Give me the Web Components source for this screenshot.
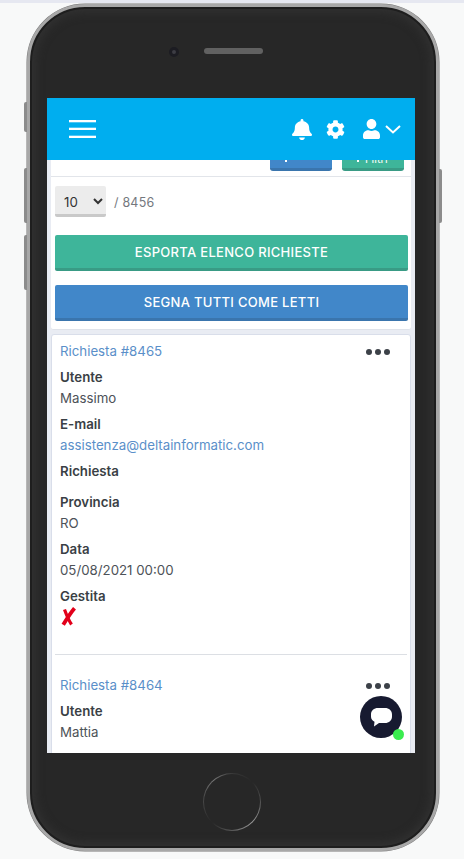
<!DOCTYPE html>
<html lang="it">
<head>
<meta charset="utf-8">
<title>Richieste</title>
<style>
  html, body { margin: 0; padding: 0; height: 100%; overflow: hidden; }
  body { background: #f8f9f9; font-family: Inter, "Liberation Sans", sans-serif; }
</style>
</head>
<body>
<phone-frame>
  <app-header></app-header>
  <toolbar-card total="8456"></toolbar-card>
  <request-card num="8465" user="Massimo" mail="assistenza@deltainformatic.com" prov="RO" date="05/08/2021 00:00"></request-card>
  <chat-bubble slot="overlay"></chat-bubble>
</phone-frame>

<script>
  class PhoneFrame extends HTMLElement {
    constructor() {
      super();
      var sh = this.attachShadow({ mode: "open" });
      sh.innerHTML = `
        <style>
          :host { display: block; }
          .strip { height: 3px; background: #e6e8f1; }
          .wrap { padding: 1px 0 0 27px; }
          .body {
            position: relative;
            box-sizing: border-box;
            width: 412px;
            height: 847px;
            border: 3px solid #a8a8a8;
            border-radius: 58px;
            background: #272727;
            box-shadow: 0 0 0 .5px #777, inset 0 0 0 2px #1e1e1e, inset 0 0 10px 5px #323232;
            padding: 91px 0 0 17px;
          }
          .side { position: absolute; width: 3px; background: #8c8c8c; }
          .l { left: -6px; border-radius: 2px 0 0 2px; }
          .r { right: -6px; border-radius: 0 2px 2px 0; }
          .camera {
            position: absolute; left: 139px; top: 40px;
            width: 4px; height: 4px; border-radius: 50%;
            background: #3d3d44; border: 3px solid #1c1c22;
          }
          .speaker {
            position: absolute; left: 174px; top: 41px;
            width: 59px; height: 6px; border-radius: 3px; background: #616161;
          }
          .screen {
            position: relative;
            width: 368px;
            height: 655px;
            overflow: hidden;
            background: #e9ecf3;
            display: flex;
            flex-direction: column;
          }
          .content { flex: 1; min-height: 0; overflow: hidden; margin-top: -22px; padding: 0 4px; }
          .home {
            position: absolute; left: 173px; top: 766px;
            box-sizing: border-box;
            width: 58px; height: 58px; border-radius: 50%;
            border: 1.5px solid transparent;
            background: linear-gradient(#272727, #272727) padding-box,
              conic-gradient(#3a3a3a 0deg, #272727 45deg, #555 90deg, #999 135deg, #5a5a5a 180deg, #272727 225deg, #555 290deg, #777 320deg, #3a3a3a 360deg) border-box;
          }
        </style>
        <div class="strip"></div>
        <div class="wrap">
          <div class="body">
            <i class="side l" style="top:95px;height:30px"></i>
            <i class="side l" style="top:161px;height:55px"></i>
            <i class="side l" style="top:228px;height:55px"></i>
            <i class="side r" style="top:162px;height:54px"></i>
            <i class="camera"></i>
            <i class="speaker"></i>
            <div class="screen">
              <slot name="head"></slot>
              <div class="content"><slot></slot></div>
              <slot name="overlay"></slot>
            </div>
            <i class="home"></i>
          </div>
        </div>
      `;
    }
    connectedCallback() {
      // the header sits on top of the scrolled content
      var h = this.querySelector("app-header");
      if (h) h.setAttribute("slot", "head");
    }
  }

  class AppHeader extends HTMLElement {
    constructor() {
      super();
      var sh = this.attachShadow({ mode: "open" });
      sh.innerHTML = `
        <style>
          :host {
            display: flex; position: relative; z-index: 2;
            height: 62px; flex: none; align-items: center;
            background: #00aeef; padding: 0 14px 0 22px; color: #fff;
          }
          .burger { margin-right: auto; }
          svg { display: block; fill: #fff; }
          .bell { margin-right: 14px; }
          .cog { margin-right: 18px; }
          .user { margin-right: 5px; }
        </style>
        <svg class="burger" width="27" height="18" viewBox="0 0 27 18"><rect width="27" height="2.3"/><rect y="7.7" width="27" height="2.3"/><rect y="15.7" width="27" height="2.3"/></svg>
        <svg class="bell" width="20" height="21" viewBox="0 0 448 512" preserveAspectRatio="none"><path d="M224 512c35.32 0 63.97-28.65 63.97-64H160.03c0 35.35 28.65 64 63.97 64zm215.39-149.71c-19.32-20.76-55.47-51.99-55.47-154.29 0-77.7-54.48-139.9-127.94-155.16V32c0-17.67-14.32-32-31.98-32s-31.98 14.33-31.98 32v20.84C118.56 68.1 64.08 130.3 64.08 208c0 102.3-36.15 133.53-55.47 154.29-6 6.45-8.66 14.16-8.61 21.71.11 16.4 12.98 32 32.1 32h383.8c19.12 0 32-15.6 32.1-32 .05-7.55-2.61-15.27-8.61-21.71z"/></svg>
        <svg class="cog" width="19" height="19" viewBox="0 0 512 512"><path d="M487.4 315.7l-42.6-24.6c4.3-23.2 4.3-47 0-70.2l42.6-24.6c4.9-2.8 7.1-8.6 5.5-14-11.1-35.6-30-67.8-54.7-94.6-3.8-4.1-10-5.1-14.8-2.3L380.8 110c-17.9-15.4-38.5-27.3-60.8-35.1V25.8c0-5.6-3.9-10.5-9.4-11.7-36.7-8.2-74.3-7.8-109.2 0-5.5 1.2-9.4 6.1-9.4 11.7V75c-22.2 7.9-42.8 19.8-60.8 35.1L88.7 85.5c-4.9-2.8-11-1.9-14.8 2.3-24.7 26.7-43.6 58.9-54.7 94.6-1.7 5.4.6 11.2 5.5 14L67.3 221c-4.3 23.2-4.3 47 0 70.2l-42.6 24.6c-4.9 2.8-7.1 8.6-5.5 14 11.1 35.6 30 67.8 54.7 94.6 3.8 4.1 10 5.1 14.8 2.3l42.6-24.6c17.9 15.4 38.5 27.3 60.8 35.1v49.2c0 5.6 3.9 10.5 9.4 11.7 36.7 8.2 74.3 7.8 109.2 0 5.5-1.2 9.4-6.1 9.4-11.7v-49.2c22.2-7.9 42.8-19.8 60.8-35.1l42.6 24.6c4.9 2.8 11 1.9 14.8-2.3 24.7-26.7 43.6-58.9 54.7-94.6 1.5-5.5-.7-11.3-5.6-14.1zM256 336c-44.1 0-80-35.9-80-80s35.9-80 80-80 80 35.9 80 80-35.9 80-80 80z"/></svg>
        <svg class="user" width="17" height="20" viewBox="0 0 448 512" preserveAspectRatio="none"><path d="M224 256c70.7 0 128-57.3 128-128S294.7 0 224 0 96 57.3 96 128s57.3 128 128 128zm89.6 32h-16.7c-22.2 10.2-46.9 16-72.9 16s-50.6-5.8-72.9-16h-16.7C60.2 288 0 348.2 0 422.4V464c0 26.5 21.5 48 48 48h352c26.5 0 48-21.5 48-48v-41.6c0-74.2-60.2-134.4-134.4-134.4z"/></svg>
        <svg width="16" height="9" viewBox="0 0 16 9" style="fill:none;stroke:#fff;stroke-width:2"><path d="M1 1l7 6.500L15 1"/></svg>
      `;
    }
  }

  class ToolbarCard extends HTMLElement {
    constructor() {
      super();
      var sh = this.attachShadow({ mode: "open" });
      sh.innerHTML = `
        <style>
          :host {
            display: block; background: #fff; border-radius: 3px;
            border-bottom: 1px solid #dfe3ea; margin-bottom: 4px;
            font-family: Inter, "Liberation Sans", sans-serif;
          }
          .top {
            display: flex; justify-content: flex-end; gap: 10px;
            padding: 0 7px 5px 0; border-bottom: 1px solid #e2e5ea;
          }
          .mini {
            box-sizing: border-box; width: 62px; height: 33px;
            border-radius: 3px; color: #fff; font-size: 11px; line-height: 13px;
            display: flex; align-items: flex-end; gap: 6px; padding: 0 0 2px 15px;
          }
          .mini i { width: 2px; height: 6px; margin-bottom: 4px; background: #fff; }
          .blue { background: #4187c9; border-bottom: 3px solid #3a75ad; }
          .green { background: #3eb59a; border-bottom: 3px solid #399b85; }
          .count { display: flex; align-items: center; gap: 8px; padding: 9px 4px 18px; }
          select {
            box-sizing: border-box; width: 51px; height: 31px; padding: 3px 0 0 5px;
            font: 13.3px Inter, "Liberation Sans", sans-serif; color: #333;
            background: #ececec; border: 0; border-bottom: 3px solid #c9c9c9; border-radius: 2px;
          }
          .total { font-size: 12.5px; color: #74787e; letter-spacing: .2px; margin-top: 2px; }
          .actions { display: flex; flex-direction: column; gap: 14px; padding: 0 3px 8px 4px; }
          .wide {
            box-sizing: border-box; height: 36px; border-radius: 2px; color: #fff;
            font-size: 13px; font-weight: 500; letter-spacing: .3px;
            display: flex; align-items: center; justify-content: center; padding-top: 1px;
          }
        </style>
        <div class="top">
          <div class="mini blue"><i></i></div>
          <div class="mini green"><i></i>Filtri</div>
        </div>
        <div class="count">
          <select><option>10</option><option>25</option><option>50</option></select>
          <span class="total">/ ${this.getAttribute("total")}</span>
        </div>
        <div class="actions">
          <div class="wide green">ESPORTA ELENCO RICHIESTE</div>
          <div class="wide blue">SEGNA TUTTI COME LETTI</div>
        </div>
      `;
    }
  }

  class RequestEntry extends HTMLElement {
    constructor() {
      super();
      var sh = this.attachShadow({ mode: "open" });
      sh.innerHTML = `
        <style>
          :host {
            display: block; padding: 6px 5px 0;
            font-size: 13.28px; line-height: 21px; color: #4d5258;
            font-family: Inter, "Liberation Sans", sans-serif;
          }
          .head { display: flex; justify-content: space-between; align-items: center; margin-bottom: 5px; }
          .title { color: #5a8fc9; }
          .dots { display: flex; gap: 3px; margin-right: 12px; }
          .dots i { width: 6px; height: 6px; border-radius: 50%; background: #3c4148; }
        </style>
        <div class="head">
          <span class="title">Richiesta #${this.getAttribute("num")}</span>
          <span class="dots"><i></i><i></i><i></i></span>
        </div>
        <slot></slot>
      `;
    }
  }

  class ReqField extends HTMLElement {
    constructor() {
      super();
      var sh = this.attachShadow({ mode: "open" });
      sh.innerHTML = `
        <style>
          :host { display: block; margin-bottom: 5px; }
          b { display: block; font-weight: 600; color: #3a3f45; }
          .v { display: block; min-height: 5px; }
          .link { color: #5a8fc9; }
        </style>
        <b>${this.getAttribute("label")}</b>
        <span class="v ${this.hasAttribute("link") ? "link" : ""}"><slot></slot></span>
      `;
    }
  }

  class RequestCard extends HTMLElement {
    constructor() {
      super();
      var sh = this.attachShadow({ mode: "open" });
      sh.innerHTML = `
        <style>
          :host {
            display: block; background: #fff; border: 1px solid #d9deea; border-radius: 3px;
            padding: 0 3px 60px;
          }
          hr { border: 0; border-top: 1px solid #dcdfe4; margin: 28px 0 14px 0; }
          svg { display: block; }
        </style>
        <request-entry num="${this.getAttribute("num")}">
          <req-field label="Utente">${this.getAttribute("user")}</req-field>
          <req-field label="E-mail" link>${this.getAttribute("mail")}</req-field>
          <req-field label="Richiesta"></req-field>
          <req-field label="Provincia">${this.getAttribute("prov")}</req-field>
          <req-field label="Data">${this.getAttribute("date")}</req-field>
          <req-field label="Gestita">
            <svg width="17" height="19" viewBox="0 0 17 19" fill="none" stroke="#e2001a"><path stroke-width="3.8" d="M14.500 1.200C10.500 6 7 11.500 3.200 17.800"/><path stroke-width="3.200" d="M4.500 2.500C6.500 8 8.500 13 11.500 17.500"/></svg>
          </req-field>
        </request-entry>
        <hr>
        <request-entry num="8464">
          <req-field label="Utente">Mattia</req-field>
        </request-entry>
      `;
    }
  }

  class ChatBubble extends HTMLElement {
    constructor() {
      super();
      var sh = this.attachShadow({ mode: "open" });
      sh.innerHTML = `
        <style>
          :host { position: absolute; right: 13px; bottom: 15px; width: 42px; height: 42px; z-index: 3; }
          .ball { width: 42px; height: 42px; border-radius: 50%; background: #171a30; display: flex; align-items: center; justify-content: center; padding-left: 1px; box-sizing: border-box; }
          .dot { position: absolute; right: -2px; bottom: -2px; width: 11px; height: 11px; border-radius: 50%; background: #3bec4f; }
        </style>
        <div class="ball">
          <svg width="21" height="19" viewBox="0 0 21 19"><path fill="#fff" d="M7 0h7c4 0 7 2.500 7 6.500v2c0 4-3 6.500-7 6.500H8l-5 3.500.5-4.700C1.200 12.500 0 11 0 8.500v-2C0 2.500 3 0 7 0z"/></svg>
        </div>
        <i class="dot"></i>
      `;
    }
  }

  customElements.define("req-field", ReqField);
  customElements.define("request-entry", RequestEntry);
  customElements.define("request-card", RequestCard);
  customElements.define("toolbar-card", ToolbarCard);
  customElements.define("app-header", AppHeader);
  customElements.define("chat-bubble", ChatBubble);
  customElements.define("phone-frame", PhoneFrame);
</script>
</body>
</html>
